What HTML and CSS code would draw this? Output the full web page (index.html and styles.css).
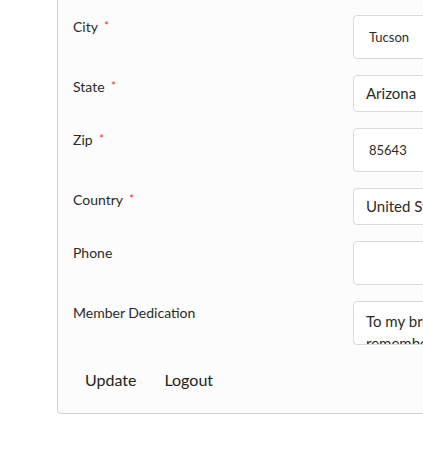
FILE: index.html
```html
<!DOCTYPE html>
<html>

<head>
    <meta charset="UTF-8">
    <meta name="viewport" content="width=device-width, initial-scale=1.0">
    <title>Member Profile</title>
    <link rel="stylesheet" href="styles.css">
</head>

<body>
    <div class="card">
        <form class="profile-form">
            <div class="form-row">
                <label class="field-label">City <span class="required">*</span></label>
                <input type="text" class="text-input" value="Tucson">
            </div>
            <div class="form-row">
                <label class="field-label">State <span class="required">*</span></label>
                <div class="select-box">Arizona</div>
            </div>
            <div class="form-row">
                <label class="field-label">Zip <span class="required">*</span></label>
                <input type="text" class="text-input" value="85643">
            </div>
            <div class="form-row">
                <label class="field-label">Country <span class="required">*</span></label>
                <div class="select-box">United States</div>
            </div>
            <div class="form-row">
                <label class="field-label">Phone</label>
                <input type="text" class="text-input" value="">
            </div>
            <div class="form-row">
                <label class="field-label">Member Dedication</label>
                <textarea class="dedication">To my brother,
remembered always with love.</textarea>
            </div>
            <div class="actions">
                <button type="button" class="link-button">Update</button>
                <button type="button" class="link-button">Logout</button>
            </div>
        </form>
    </div>
</body>

</html>
```

FILE: styles.css
```css
body {
    margin: 0;
    background-color: #ffffff;
    font-family: Lato, "Open Sans", sans-serif;
    color: #333333;
    overflow: hidden;
}

.card {
    width: 520px;
    margin-left: 57px;
    margin-top: -31px;
    background-color: #fcfcfc;
    border: 1px solid #cfcfcf;
    border-radius: 4px;
    box-sizing: border-box;
    padding: 45px 0 13px 15px;
}

.profile-form {
    display: flex;
    flex-direction: column;
    gap: 16px;
}

.form-row {
    display: grid;
    grid-template-columns: 280px 1fr;
    align-items: start;
}

.field-label {
    font-size: 14px;
    line-height: 18px;
    padding-top: 3px;
    color: #2a2a2a;
}

.required {
    color: #ff1a1a;
    font-size: 11px;
    position: relative;
    top: -2px;
    margin-left: 3px;
}

.text-input {
    height: 44px;
    box-sizing: border-box;
    border: 1px solid #dadada;
    border-radius: 4px;
    background-color: #ffffff;
    padding: 0 15px;
    font-family: Lato, sans-serif;
    font-size: 13px;
    color: #2b2b2b;
}

.select-box {
    height: 37px;
    box-sizing: border-box;
    border: 1px solid #dadada;
    border-radius: 4px;
    background-color: #ffffff;
    padding: 0 12px;
    font-size: 15px;
    line-height: 35px;
    color: #2b2b2b;
    white-space: nowrap;
}

.dedication {
    height: 44px;
    box-sizing: border-box;
    border: 1px solid #dadada;
    border-radius: 4px;
    background-color: #ffffff;
    padding: 8px 12px 0;
    font-family: Lato, sans-serif;
    font-size: 15px;
    line-height: 22px;
    color: #2b2b2b;
    resize: none;
    overflow: hidden;
}

.actions {
    display: flex;
    gap: 4px;
    margin-top: -1px;
}

.link-button {
    background: none;
    border: none;
    padding: 10px 12px;
    font-family: Lato, sans-serif;
    font-size: 16px;
    line-height: 20px;
    color: #222222;
    cursor: pointer;
}
```
